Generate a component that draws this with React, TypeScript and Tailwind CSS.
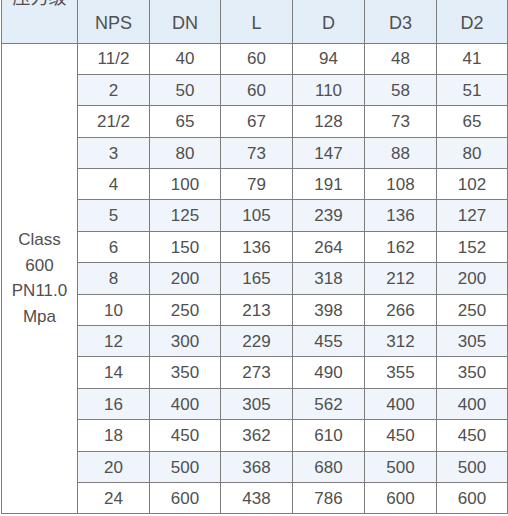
const rows: string[][] = [
  ['11/2', '40', '60', '94', '48', '41'],
  ['2', '50', '60', '110', '58', '51'],
  ['21/2', '65', '67', '128', '73', '65'],
  ['3', '80', '73', '147', '88', '80'],
  ['4', '100', '79', '191', '108', '102'],
  ['5', '125', '105', '239', '136', '127'],
  ['6', '150', '136', '264', '162', '152'],
  ['8', '200', '165', '318', '212', '200'],
  ['10', '250', '213', '398', '266', '250'],
  ['12', '300', '229', '455', '312', '305'],
  ['14', '350', '273', '490', '355', '350'],
  ['16', '400', '305', '562', '400', '400'],
  ['18', '450', '362', '610', '450', '450'],
  ['20', '500', '368', '680', '500', '500'],
  ['24', '600', '438', '786', '600', '600'],
];

const headers = ['NPS', 'DN', 'L', 'D', 'D3', 'D2'];

export default function App() {
  return (
    <div
      className="w-[508px] h-[516px] overflow-hidden bg-white pl-px text-[#505050]"
      style={{ fontFamily: '"Liberation Sans", "Noto Sans CJK SC", sans-serif' }}
    >
      <table className="w-[506px] border-collapse table-fixed">
        <colgroup>
          <col className="w-[76px]" />
          <col className="w-[72px]" />
          <col className="w-[71px]" />
          <col className="w-[72px]" />
          <col className="w-[72px]" />
          <col className="w-[72px]" />
          <col className="w-[71px]" />
        </colgroup>
        <thead>
          <tr className="h-[43px] bg-[#e4eef8]">
            <th className="border-x border-b border-[#7d7d7d] align-top p-0 font-normal">
              <div className="-mt-[11px] text-[18px] leading-[18px]">压力级</div>
            </th>
            {headers.map((h) => (
              <th key={h} className="border-x border-b border-[#7d7d7d] p-0 pt-[4px] text-[18px] font-normal">
                {h}
              </th>
            ))}
          </tr>
        </thead>
        <tbody>
          {rows.map((r, i) => (
            <tr key={i} className={i % 2 === 1 ? 'h-[31.4px] bg-[#eff5fb]' : 'h-[31.4px] bg-white'}>
              {i === 0 && (
                <td
                  rowSpan={rows.length}
                  className="border border-[#7d7d7d] bg-white p-0 text-center align-middle text-[17px] leading-[25.5px]"
                >
                  Class
                  <br />
                  600
                  <br />
                  PN11.0
                  <br />
                  Mpa
                </td>
              )}
              {r.map((c, j) => (
                <td key={j} className="border border-[#7d7d7d] p-0 pt-px text-center text-[17px]">
                  {c}
                </td>
              ))}
            </tr>
          ))}
        </tbody>
      </table>
    </div>
  );
}
